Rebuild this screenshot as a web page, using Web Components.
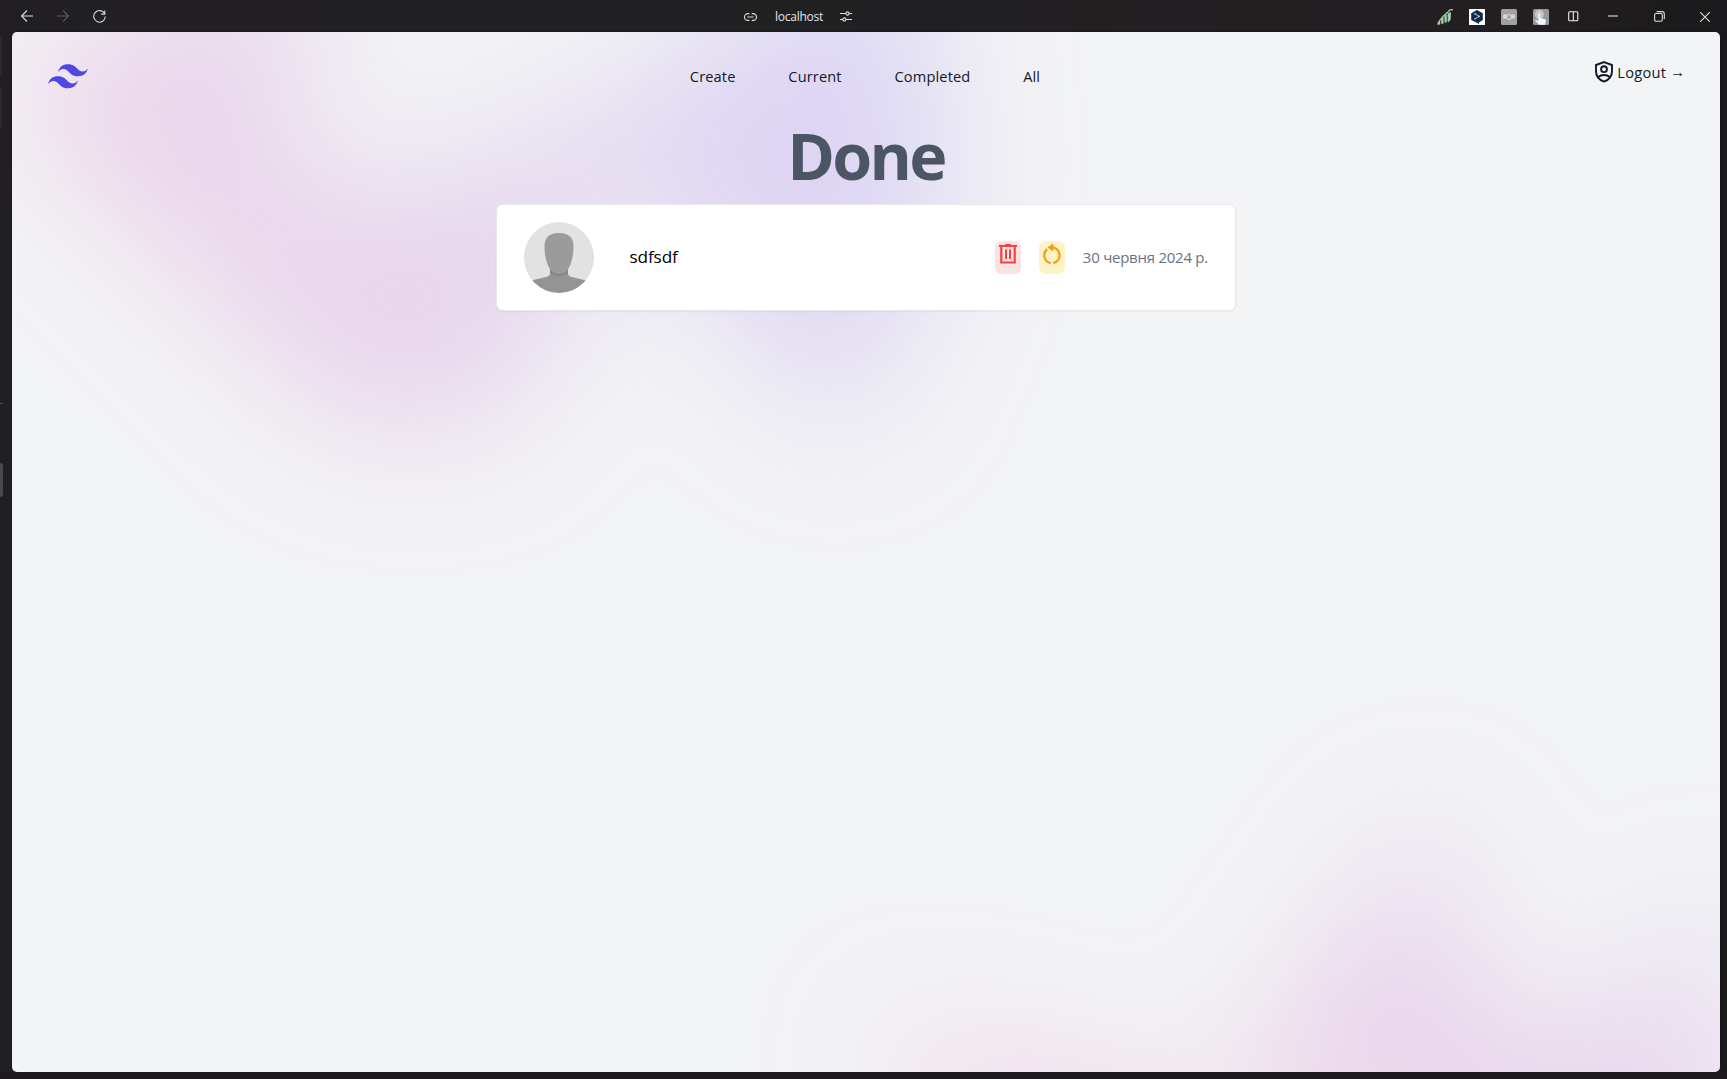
<!DOCTYPE html>
<html lang="uk">
<head>
<meta charset="utf-8">
<title>localhost</title>
<style>
html,body{margin:0;height:100%;overflow:hidden}
body{font-family:"Open Sans","Noto Sans",sans-serif;color:#111827}
</style>
</head>
<body>
<browser-window>
  <title-bar slot="bar"></title-bar>
  <todo-page>
    <site-header></site-header>
    <page-title>Done</page-title>
    <todo-card>sdfsdf<span slot="date">30 червня 2024 р.</span></todo-card>
  </todo-page>
</browser-window>
<script>
function define(name, html){
  const t=document.createElement('template'); t.innerHTML=html;
  customElements.define(name,class extends HTMLElement{
    constructor(){super();this.attachShadow({mode:'open'}).append(t.content.cloneNode(true));}
  });
}

define('browser-window',`<style>
:host{display:grid;grid-template:32px 1fr 7px / 12px 1fr 7px;width:100%;height:100vh;
 background:linear-gradient(90deg,#221f23 0,#212023 25%,#202022 55%,#241e21 72%,#231e21 88%,#1a191b 100%)}
.bar{grid-area:1/1/2/4}
.view{grid-area:2/2/3/3;border-radius:5px;overflow:hidden;display:grid;box-shadow:0 0 2px #0008}
.edge{grid-area:2/1/3/2;display:flex;flex-direction:column;align-items:flex-start}
.edge i{width:2px;border-radius:0 3px 3px 0;background:#2c2a2d}
.foot{grid-area:3/1/4/4;background:#1b191c}
</style><div class="bar"><slot name="bar"></slot></div>
<div class="edge"><i style="height:40px;margin-top:4px"></i><i style="height:40px;margin-top:12px"></i><i style="height:1px;margin-top:275px;width:3px;background:#555356"></i><i style="height:34px;margin-top:59px;width:3px;background:#4b494c"></i></div>
<div class="view"><slot></slot></div><div class="foot"></div>`);

define('title-bar',`<style>
:host{display:block;height:32px;color:#e6e6e6}
.row{display:grid;grid-template-columns:743px auto 1fr auto;align-items:center;height:32px}
svg{display:block;fill:none;stroke:#dcdcdc;stroke-width:1.1}
.nav{display:flex;gap:24px;padding-left:21px}
.nav svg:nth-child(2){stroke:#5e5c60}
.addr{display:flex;align-items:center;font-size:12px;letter-spacing:-.24px;gap:18px;padding-top:1px}
.tools{grid-column:4;display:flex;align-items:center;padding-right:17px;padding-top:1px}
</style><div class="row">
<div class="nav">
<svg width="12" height="12" viewBox="0 0 12 12" style="margin-top:1px"><path d="M12 6H.8M6 .5.5 6 6 11.5"/></svg>
<svg width="12" height="12" viewBox="0 0 12 12" style="margin:1px 0 0"><path d="M0 6h11.2M6 .5 11.5 6 6 11.5"/></svg>
<svg width="13" height="13" viewBox="0 0 13 13" style="margin-top:1px"><path d="M11.6 3.6A5.8 5.8 0 1 0 12.3 6.5M11.8.5v3.6H8.2"/></svg>
</div>
<div class="addr">
<svg width="13" height="8" viewBox="0 0 13 8" style="margin-left:1px;margin-right:-1px"><path d="M5.300.6H3.900a3.400 3.400 0 0 0 0 6.800h1.400M7.700.6h1.400a3.400 3.400 0 0 1 0 6.800H7.700M3.300 4h6.400"/></svg>
<span style="position:relative;left:1px">localhost</span>
<svg width="12" height="11" viewBox="0 0 12 11"><path d="M0 2.500h6M9 2.500h3M0 8.500h3M6 8.500h6"/><circle cx="7.500" cy="2.500" r="1.600"/><circle cx="4.400" cy="8.500" r="1.600"/></svg>
</div>
<div class="tools">
<svg width="17" height="16" viewBox="0 0 17 16" style="margin-right:15px;stroke:#9fceac;stroke-width:2.400"><path d="M2 15.500V12.500M5.300 14.700V8.500M8.600 13.500V6M11.800 12V4"/><path d="M.8 15.600 3 11 7 6.500 11 3l2-2.200L16 .6M11 12.800l2-2.600.4-7" style="stroke-width:1.300"/></svg>
<svg width="16" height="16" viewBox="0 0 16 16" style="margin-right:16px;stroke:none"><path fill="#fff" d="M0 0h16v16H0z"/><path fill="#0f2b46" d="M8 1l5.800 3.300v6.800L10 13.400V15l-2.700-1.600L2.200 11V4.300z"/><path d="m6 4.800 4.200 2.600L6 9.800" stroke="#fff" stroke-width=".7"/><circle cx="6" cy="4.900" r=".8" fill="#c5d2dd"/><circle cx="10" cy="7.400" r=".8" fill="#c5d2dd"/><circle cx="6" cy="9.800" r=".8" fill="#c5d2dd"/></svg>
<svg width="16" height="16" viewBox="0 0 16 16" style="margin-right:16px;stroke:none"><rect width="16" height="16" rx="1.500" fill="#a1a1a1"/><circle cx="4" cy="7.500" r="2.200" fill="#d6d6d6"/><circle cx="12" cy="7.500" r="2.200" fill="#d6d6d6"/><circle cx="8" cy="8" r="2.500" fill="#a1a1a1" stroke="#e1e1e1" stroke-width="1"/></svg>
<svg width="16" height="16" viewBox="0 0 16 16" style="margin-right:19px;stroke:none"><rect width="16" height="16" rx="1.500" fill="#989898"/><circle cx="6.300" cy="5.400" r="4.600" fill="#c6c6c6"/><path fill="#f1f6fb" d="M5.300 4.500q1-1 2 0V9l4.800 1.200q1 .5.8 2L12 15.700H6.200L2 11.500q.8-1.300 2-.3l1.300.8z"/></svg>
<svg width="11" height="11" viewBox="0 0 11 11" style="margin-right:29px;stroke:#eee"><rect x=".7" y=".7" width="9.100" height="9.100" rx="1"/><path d="M5.300 1v9"/></svg>
<svg width="10" height="10" viewBox="0 0 10 10" style="margin-right:36px"><path d="M0 4h10"/></svg>
<svg width="11" height="11" viewBox="0 0 11 11" style="margin-right:35px"><rect x=".6" y="2.500" width="7.700" height="7.700" rx="1.500"/><path d="M2.600 .6H8Q10.300.6 10.300 3v5"/></svg>
<svg width="10" height="10" viewBox="0 0 10 10"><path d="m0 0 10 10M10 0 0 10"/></svg>
</div></div>`);

define('glow-shape',`<style>
:host{position:absolute;left:0;right:0;overflow:hidden;filter:blur(70.4px);z-index:-1;pointer-events:none}
div{position:relative;left:var(--x);aspect-ratio:1155/678;width:1270.5px;transform:translateX(-50%) rotate(var(--r));
background:linear-gradient(to top right,#ff80b5,#9089fc);opacity:.3;
clip-path:polygon(74.1% 44.1%,100% 61.6%,97.5% 26.9%,85.5% .1%,80.7% 2%,72.5% 32.5%,60.2% 62.4%,52.4% 68.1%,47.5% 58.3%,45.2% 34.5%,27.5% 76.7%,.1% 64.9%,17.9% 100%,27.6% 76.8%,76.1% 97.7%,74.1% 44.1%)}
</style><div></div>`);

define('todo-page',`<style>
:host{display:block;position:relative;isolation:isolate;overflow:hidden;background:#f3f4f6}
</style>
<glow-shape style="top:-352px;--x:calc(50% - 528px);--r:30deg"></glow-shape>
<glow-shape style="top:calc(100% - 528px);--x:calc(50% + 633.6px);--r:0deg"></glow-shape>
<slot></slot>`);

define('site-header',`<style>
:host{display:flex;height:88px;padding:0 35px 0 36px;font-size:14.6px;font-weight:500;letter-spacing:.14px;color:#111827}
.side{flex:1;display:flex}
.logo{margin-top:32px}
nav{display:flex;gap:52.800px;padding:33px 3px 0 0;line-height:22px}
.out{justify-content:flex-end;align-items:flex-start;gap:3px;line-height:22px;padding-top:29px}
.out span{letter-spacing:.25px}
.out b{font-weight:500;position:relative;top:-1px}
</style>
<div class="side"><svg class="logo" width="40" height="25" viewBox="0 0 54 33"><path fill="#4f46e5" fill-rule="evenodd" d="M27 0c-7.2 0-11.7 3.6-13.5 10.8 2.7-3.6 5.85-4.95 9.45-4.05 2.054.513 3.522 2.004 5.147 3.653C30.744 13.09 33.808 16.2 40.5 16.2c7.2 0 11.7-3.6 13.5-10.8-2.7 3.6-5.85 4.95-9.45 4.05-2.054-.513-3.522-2.004-5.147-3.653C36.756 3.11 33.692 0 27 0zM13.5 16.2C6.3 16.2 1.8 19.8 0 27c2.7-3.6 5.85-4.95 9.45-4.05 2.054.514 3.522 2.004 5.147 3.653C17.244 29.29 20.308 32.4 27 32.4c7.2 0 11.7-3.6 13.5-10.8-2.7 3.6-5.85 4.95-9.45 4.05-2.054-.513-3.522-2.004-5.147-3.653C23.256 19.31 20.192 16.2 13.5 16.2z"/></svg></div>
<nav><span>Create</span><span>Current</span><span>Completed</span><span>All</span></nav>
<div class="side out"><svg width="20" height="22" viewBox="0 0 20 22" fill="none" stroke="#111827" stroke-width="1.9"><path d="M10 1.100 18 4v6.200c0 4.800-3.300 8.700-8 10.400-4.700-1.700-8-5.600-8-10.400V4z"/><circle cx="10" cy="8.200" r="2.900"/><path d="M4 16.200c3.500-2.900 8.500-2.900 12 0"/></svg><span>Logout <b>→</b></span></div>`);

define('page-title',`<style>
:host{display:block;text-align:center;font-size:64.600px;font-weight:700;line-height:66px;letter-spacing:-2.700px;color:#4b5563;margin-top:2px;height:82px}
</style><slot></slot>`);

define('action-chip',`<style>
:host{display:flex;justify-content:center;width:26px;height:33px;border-radius:6.600px;background:var(--bg)}
</style><slot></slot>`);

define('user-avatar',`<style>:host{display:block;width:70px;height:71px}svg{display:block}</style>
<svg width="70" height="71" viewBox="0 0 70 71"><defs><clipPath id="c"><ellipse cx="35" cy="35.500" rx="35" ry="35.500"/></clipPath></defs><g clip-path="url(#c)"><path fill="#e2e2e2" d="M0 0h70v71H0z"/><path fill="#949494" d="M26 45h18v6c0 2 1 3.500 4 4l16 4v13H5V59l17-4c3-.6 4-2 4-4z"/><path fill="#858585" d="M26 46.500h18v4.500q-9 6.500-18 0z"/><path fill="#9b9b9b" d="M35 11c9 0 14.500 4 14.500 13 0 10-2 17-5 22.500-3 4.500-6.200 5.500-9.500 5.500s-6.500-1-9.500-5.500c-3-5.500-5-12.500-5-22.500 0-9 5.500-13 14.500-13z"/></g></svg>`);

define('todo-card',`<style>
:host{display:flex;align-items:center;box-sizing:border-box;width:740px;height:107px;margin:0 auto;padding:0 27px;background:#fff;border:1px solid #e5e7eb;border-radius:6.600px;box-shadow:0 1px 2px #0000000d}
.name{flex:1;margin:-2px 0 0 35.400px;font-size:17.200px;letter-spacing:-.1px;font-weight:500;color:#000}
action-chip{margin-right:18px}
.date{font-size:15px;letter-spacing:-.25px;color:#6b7280;margin-top:-2px}
</style>
<user-avatar></user-avatar><div class="name"><slot></slot></div>
<action-chip style="--bg:#fee2e2"><svg width="18" height="20" viewBox="0 0 18 20" style="margin-top:3px" fill="none" stroke="#ef4444" stroke-width="2.200"><path d="M0 2h18M6 1h6M2.300 2v16.500h13.400V2"/><path stroke-width="2" d="M7 5.500v9.500M11 5.500v9.500"/></svg></action-chip>
<action-chip style="--bg:#fef3c7"><svg width="18" height="22" viewBox="0 0 18 22" style="margin-top:2px" fill="none" stroke="#f59e0b" stroke-width="2.200"><path d="M7.700 20.200A8 8 0 0 1 4.200 6.200M10.300 20.200A8 8 0 0 0 8 4.400"/><path fill="#f59e0b" stroke="none" d="M4.500 4.400 10.200.3v8.200z"/></svg></action-chip>
<div class="date"><slot name="date"></slot></div>`);
</script>
</body>
</html>
